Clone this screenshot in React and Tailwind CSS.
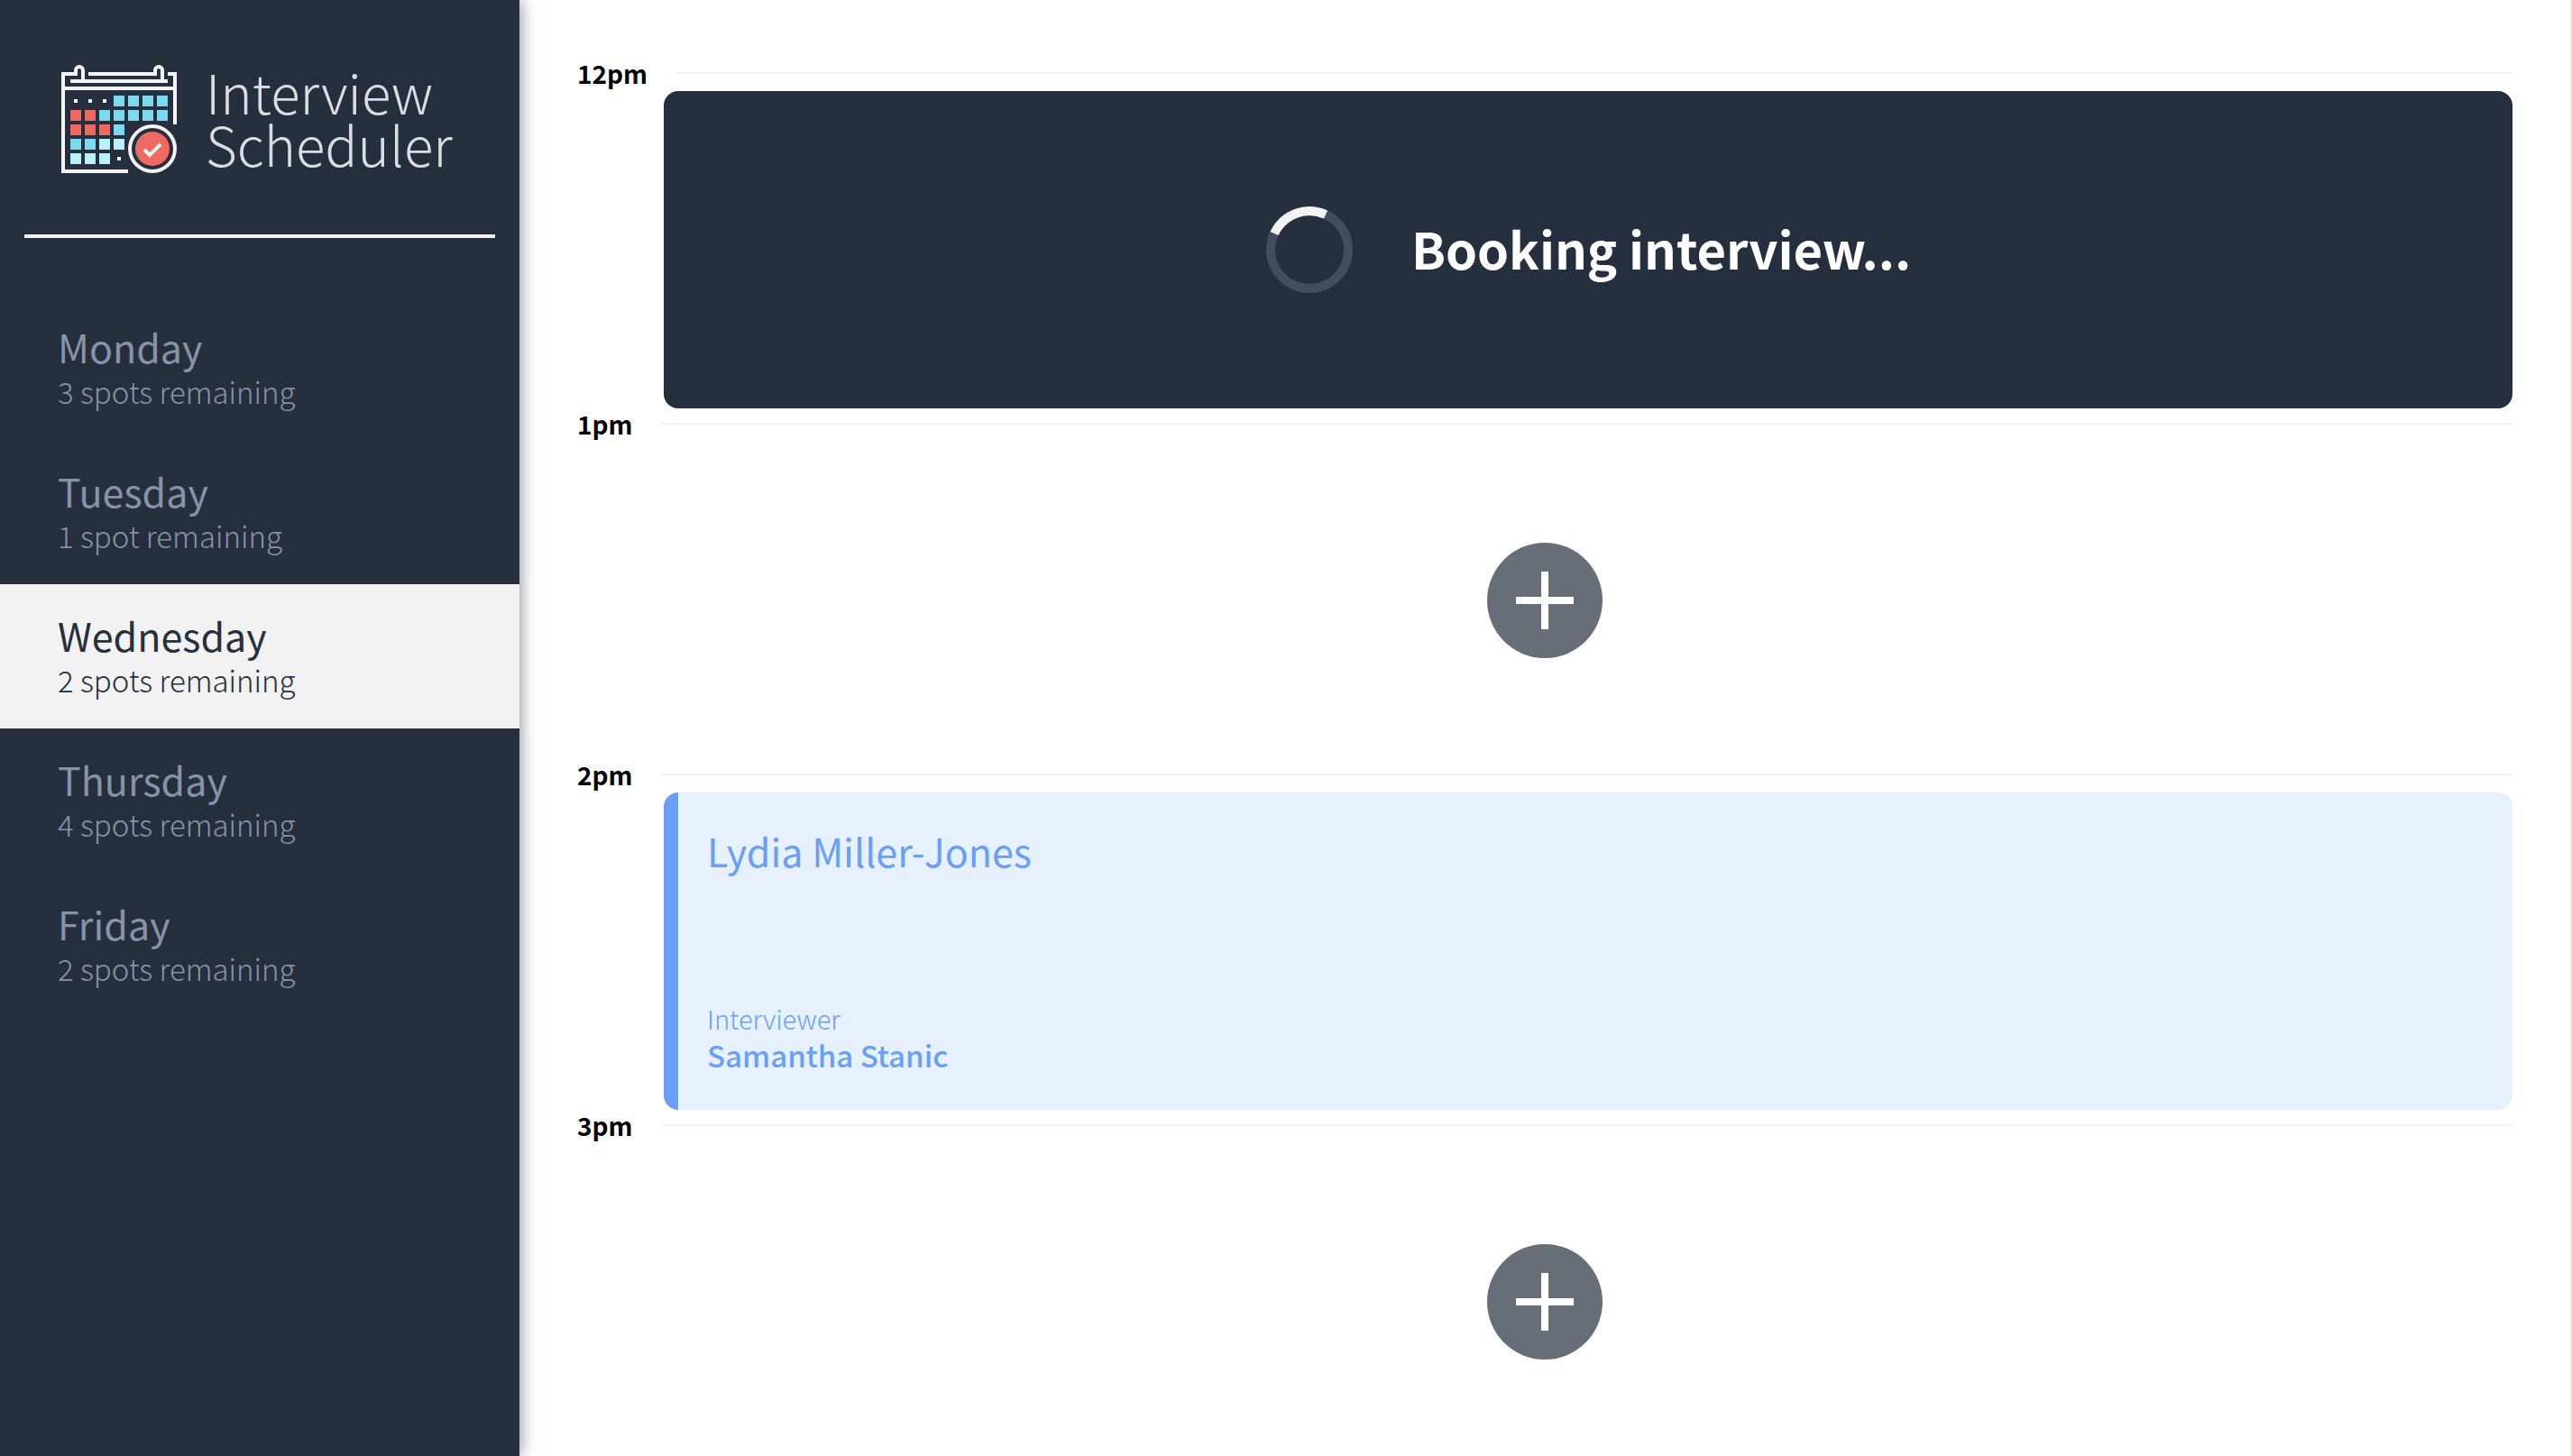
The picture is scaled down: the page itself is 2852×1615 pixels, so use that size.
import React from "react";

const WHITE = "#f4f3f3";
const CYAN = "#7cd9f0";
const PALE = "#b9f0fa";
const RED = "#ee6a62";

const CELLS = [
  [null, null, null, CYAN, CYAN, CYAN, CYAN],
  [RED, RED, CYAN, CYAN, CYAN, CYAN, CYAN],
  [RED, RED, RED, CYAN],
  [CYAN, CYAN, PALE, PALE],
  [PALE, PALE, PALE, null],
];

const DAYS = [
  { name: "Monday", spots: 3 },
  { name: "Tuesday", spots: 1 },
  { name: "Wednesday", spots: 2 },
  { name: "Thursday", spots: 4 },
  { name: "Friday", spots: 2 },
];

const SELECTED_DAY = "Wednesday";

const SLOTS = [
  { time: "12pm", status: "Booking interview..." },
  { time: "1pm" },
  { time: "2pm", student: "Lydia Miller-Jones", interviewer: "Samantha Stanic" },
  { time: "3pm" },
];

function CalendarIcon() {
  return (
    <svg viewBox="0 0 128 120" className="h-[120px] w-[128px] shrink-0" aria-hidden="true">
      <g fill="none" stroke={WHITE} strokeWidth="4">
        <path d="M24 17V6a4 4 0 0 0-8 0v4H2v108h72" />
        <path d="M112 17V6a4 4 0 0 0-8 0v4H30" />
        <path d="M118 10h8v56M10 18h108M2 26h124" />
        <circle cx="101" cy="93" r="25" />
      </g>
      <circle cx="101" cy="93" r="19" fill={RED} />
      <path d="M92 94l6 6 12-12" fill="none" stroke={WHITE} strokeWidth="4" />
      {CELLS.map((row, r) =>
        row.map((color, c) =>
          color ? (
            <rect key={`${r}-${c}`} x={10 + c * 16} y={34 + r * 16} width="12" height="12" fill={color} />
          ) : (
            <rect key={`${r}-${c}`} x={14 + c * 16} y={38 + r * 16} width="4" height="4" fill={WHITE} />
          )
        )
      )}
    </svg>
  );
}

function Spinner() {
  return (
    <svg viewBox="0 0 98 98" className="size-[98px] shrink-0" aria-hidden="true">
      <circle cx="49" cy="49" r="43" fill="none" stroke="#454c5a" strokeWidth="10" />
      <path d="M10 31A43 43 0 0 1 67 10" fill="none" stroke="#f2f2f2" strokeWidth="10" />
    </svg>
  );
}

function DayItem({ name, spots }) {
  const selected = name === SELECTED_DAY;
  return (
    <li>
      <button
        type="button"
        aria-current={selected ? "true" : undefined}
        className={
          "block w-full cursor-pointer px-16 pt-8 pb-7 text-left " +
          (selected ? "bg-[#f2f2f2] text-[#262f3d]" : "text-[#8794a7]")
        }
      >
        <span className="block text-[43px] leading-[48px]">{name}</span>
        <span className="block text-[33px] leading-[52px] font-light">
          {spots} {spots === 1 ? "spot" : "spots"} remaining
        </span>
      </button>
    </li>
  );
}

function Sidebar() {
  return (
    <aside className="z-10 w-[576px] shrink-0 bg-[#262f3d] shadow-[2px_0_16px_rgba(39,47,61,0.5)]">
      <div className="flex items-center gap-8 px-[68px] pt-[72px]">
        <CalendarIcon />
        <h1 className="pb-1 text-[60px] leading-[58px] font-light text-[#dcdde0]">
          <span className="block">Interview</span>
          <span className="block">Scheduler</span>
        </h1>
      </div>
      <hr className="mx-[27px] mt-[68px] mb-16 border-0 border-t-4 border-[#f5f2f0]" />
      <nav aria-label="Days">
        <ul>
          {DAYS.map((day) => (
            <DayItem key={day.name} {...day} />
          ))}
        </ul>
      </nav>
    </aside>
  );
}

function SlotBody({ slot }) {
  if (slot.status) {
    return (
      <div role="status" className="ml-24 flex h-full items-center justify-center gap-16 rounded-2xl bg-[#262f3d] text-white">
        <Spinner />
        <p className="pb-1 text-[56px] leading-[64px] font-bold">{slot.status}</p>
      </div>
    );
  }
  if (slot.student) {
    return (
      <div className="ml-24 flex h-full flex-col justify-between rounded-2xl border-l-16 border-[#699ff9] bg-[#e7f1fe] px-8 py-10 text-[#699ff9]">
        <h2 className="text-[43px] leading-[48px]">{slot.student}</h2>
        <div>
          <h4 className="text-[29px] leading-[40px] font-light">Interviewer</h4>
          <h3 className="text-[33px] leading-[42px] font-medium">{slot.interviewer}</h3>
        </div>
      </div>
    );
  }
  return (
    <div className="flex h-full items-center justify-center">
      <button type="button" aria-label="Add appointment" className="cursor-pointer rounded-full">
        <svg viewBox="0 0 128 128" className="size-32" aria-hidden="true">
          <circle cx="64" cy="64" r="64" fill="#686e78" />
          <path d="M64 32v64M32 64h64" stroke="#fff" strokeWidth="8" />
        </svg>
      </button>
    </div>
  );
}

function Slot({ slot }) {
  return (
    <article>
      <header className="flex h-[37px] items-center gap-8 pb-1">
        <h4 className="text-[28px] leading-[32px] font-bold text-black">{slot.time}</h4>
        <hr className="grow border-0 border-t-2 border-[#f1f1f1]" />
      </header>
      <div className="h-[352px]">
        <SlotBody slot={slot} />
      </div>
    </article>
  );
}

export default function App() {
  return (
    <div className="flex h-screen overflow-hidden bg-white font-['Noto_Sans_CJK_SC',sans-serif]">
      <Sidebar />
      <main className="min-w-0 grow overflow-hidden border-r-2 border-[#e8e8e8] px-16 pt-16">
        {SLOTS.map((slot) => (
          <Slot key={slot.time} slot={slot} />
        ))}
      </main>
    </div>
  );
}
